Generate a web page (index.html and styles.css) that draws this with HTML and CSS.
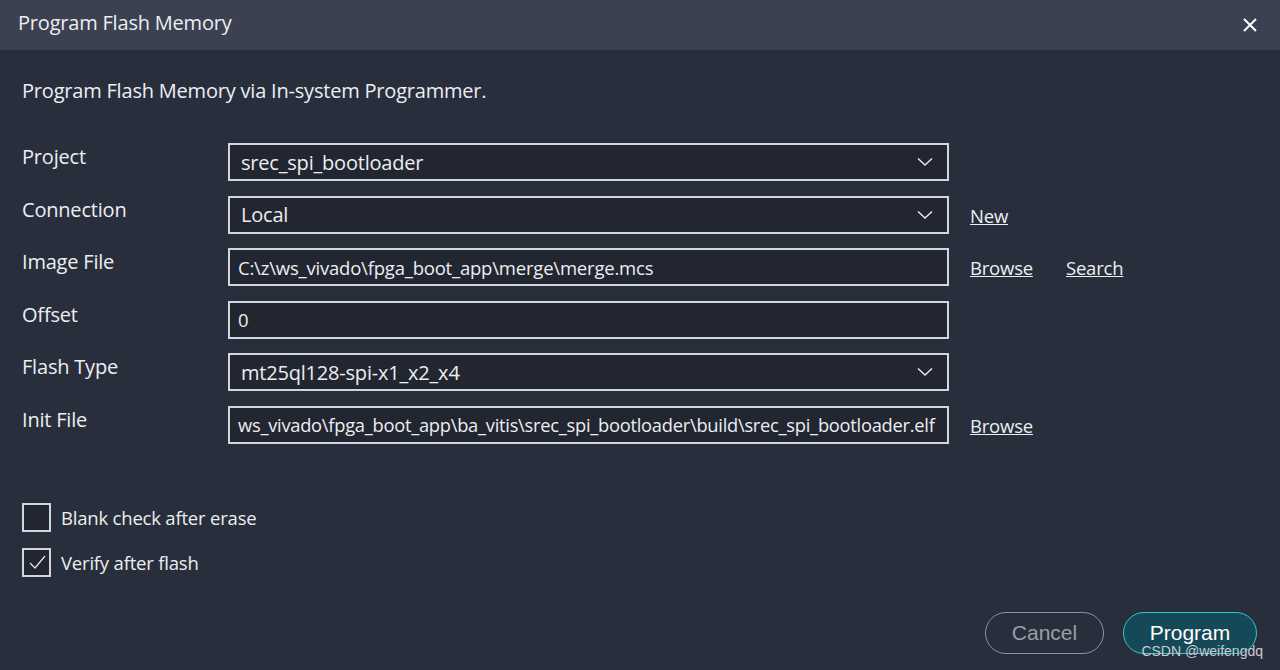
FILE: index.html
```
<!DOCTYPE html>
<html lang="en">
<head>
    <meta charset="UTF-8">
    <title>Program Flash Memory</title>
    <link rel="stylesheet" href="styles.css">
</head>
<body>
    <div class="dialog">
        <div class="header">
            <h1>Program Flash Memory</h1>
            <button class="close-btn" aria-label="Close">
                <svg width="16" height="16" viewBox="0 0 16 16"><path d="M2 2 L14 14 M14 2 L2 14" stroke="#fff" stroke-width="2" fill="none"/></svg>
            </button>
        </div>

        <div class="content">
            <p class="intro">Program Flash Memory via In-system Programmer.</p>

            <div class="form">
                <div class="row">
                    <label>Project</label>
                    <div class="field select">
                        <span class="value">srec_spi_bootloader</span>
                        <svg class="chevron" width="16" height="10" viewBox="0 0 16 10"><path d="M1 1.5 L8 8 L15 1.5" stroke="#e6e8ee" stroke-width="1.5" fill="none"/></svg>
                    </div>
                    <div class="links"></div>
                </div>
                <div class="row">
                    <label>Connection</label>
                    <div class="field select">
                        <span class="value">Local</span>
                        <svg class="chevron" width="16" height="10" viewBox="0 0 16 10"><path d="M1 1.5 L8 8 L15 1.5" stroke="#e6e8ee" stroke-width="1.5" fill="none"/></svg>
                    </div>
                    <div class="links"><a href="#">New</a></div>
                </div>
                <div class="row">
                    <label>Image File</label>
                    <div class="field text">
                        <span class="value">C:\z\ws_vivado\fpga_boot_app\merge\merge.mcs</span>
                    </div>
                    <div class="links"><a href="#">Browse</a><a href="#">Search</a></div>
                </div>
                <div class="row">
                    <label>Offset</label>
                    <div class="field text">
                        <span class="value">0</span>
                    </div>
                    <div class="links"></div>
                </div>
                <div class="row">
                    <label>Flash Type</label>
                    <div class="field select">
                        <span class="value">mt25ql128-spi-x1_x2_x4</span>
                        <svg class="chevron" width="16" height="10" viewBox="0 0 16 10"><path d="M1 1.5 L8 8 L15 1.5" stroke="#e6e8ee" stroke-width="1.5" fill="none"/></svg>
                    </div>
                    <div class="links"></div>
                </div>
                <div class="row">
                    <label>Init File</label>
                    <div class="field text scrolled">
                        <span class="value">ws_vivado\fpga_boot_app\ba_vitis\srec_spi_bootloader\build\srec_spi_bootloader.elf</span>
                    </div>
                    <div class="links"><a href="#">Browse</a></div>
                </div>
            </div>

            <div class="checks">
                <div class="check">
                    <span class="box"></span>
                    <span>Blank check after erase</span>
                </div>
                <div class="check">
                    <span class="box">
                        <svg width="20" height="18" viewBox="0 0 20 18"><path d="M3 10 L8 15 L18 3" stroke="#e6e8ee" stroke-width="1.2" fill="none"/></svg>
                    </span>
                    <span>Verify after flash</span>
                </div>
            </div>

            <div class="footer">
                <button class="btn btn-cancel">Cancel</button>
                <button class="btn btn-primary">Program</button>
            </div>
        </div>
        <div class="watermark">CSDN @weifengdq</div>
    </div>
</body>
</html>
```

FILE: styles.css
```
:root {
    --header-bg: #3b4151;
    --body-bg: #292e3c;
    --field-bg: #222631;
    --border: #d3d6dc;
    --text: #eceef2;
}

* {
    margin: 0;
    padding: 0;
    box-sizing: border-box;
}

body {
    background: var(--body-bg);
    color: var(--text);
    font-family: 'Open Sans', 'Noto Sans', sans-serif;
    width: 1280px;
    height: 670px;
    overflow: hidden;
}

.dialog {
    position: relative;
    height: 670px;
}

.header {
    height: 50px;
    background: var(--header-bg);
    display: flex;
    align-items: center;
    justify-content: space-between;
    padding: 0 22px 5px 18px;
}

.header h1 {
    font-size: 20px;
    font-weight: 400;
    letter-spacing: -0.2px;
}

.close-btn {
    background: none;
    border: none;
    display: flex;
    cursor: pointer;
    margin-top: 5px;
}

.content {
    padding: 28px 22px 0 22px;
}

.intro {
    font-size: 20px;
    letter-spacing: -0.2px;
    height: 26px;
    line-height: 26px;
}

.form {
    margin-top: 39px;
    display: flex;
    flex-direction: column;
    gap: 14.5px;
}

.row {
    display: flex;
    align-items: flex-start;
}

.row label {
    width: 206px;
    font-size: 20px;
    letter-spacing: -0.2px;
    line-height: 26px;
    padding-top: 1px;
}

.field {
    width: 721px;
    height: 38px;
    border: 2px solid var(--border);
    background: var(--field-bg);
    display: flex;
    align-items: center;
    padding: 0 10px;
    font-size: 20px;
    letter-spacing: -0.2px;
    overflow: hidden;
    white-space: nowrap;
}

.field.select {
    justify-content: space-between;
    padding: 0 14px 0 11px;
}

.field.text {
    padding: 0 8px;
}

.field.text .value {
    font-size: 18.5px;
}

.field.scrolled {
    padding: 0 4px 0 8px;
}

.field.scrolled .value {
    font-size: 18.3px;
    letter-spacing: -0.25px;
}

.links {
    display: flex;
    gap: 33px;
    margin-left: 21px;
    height: 38px;
    align-items: center;
    padding-top: 1px;
}

.links a {
    color: var(--text);
    font-size: 18.5px;
    letter-spacing: -0.2px;
}

.checks {
    margin-top: 59px;
    display: flex;
    flex-direction: column;
    gap: 16px;
}

.check {
    display: flex;
    align-items: center;
    gap: 10px;
    font-size: 18.5px;
    letter-spacing: -0.2px;
}

.box {
    width: 29px;
    height: 29px;
    border: 2px solid var(--border);
    background: var(--field-bg);
    display: flex;
    align-items: center;
    justify-content: center;
}

.footer {
    display: flex;
    justify-content: flex-end;
    gap: 19px;
    margin-top: 35px;
    padding-right: 1px;
}

.btn {
    height: 42px;
    border-radius: 21px;
    font-family: 'Liberation Sans', Arial, sans-serif;
    font-size: 21px;
    cursor: pointer;
}

.btn-cancel {
    width: 119px;
    background: transparent;
    border: 1px solid #8d919b;
    color: #9a9ea7;
}

.btn-primary {
    width: 134px;
    background: #164957;
    border: 1px solid #2ec8cf;
    color: #ffffff;
}

.watermark {
    position: absolute;
    right: 17px;
    top: 643px;
    font-family: 'Liberation Sans', Arial, sans-serif;
    font-size: 14px;
    color: #c8ccd2;
}
```
